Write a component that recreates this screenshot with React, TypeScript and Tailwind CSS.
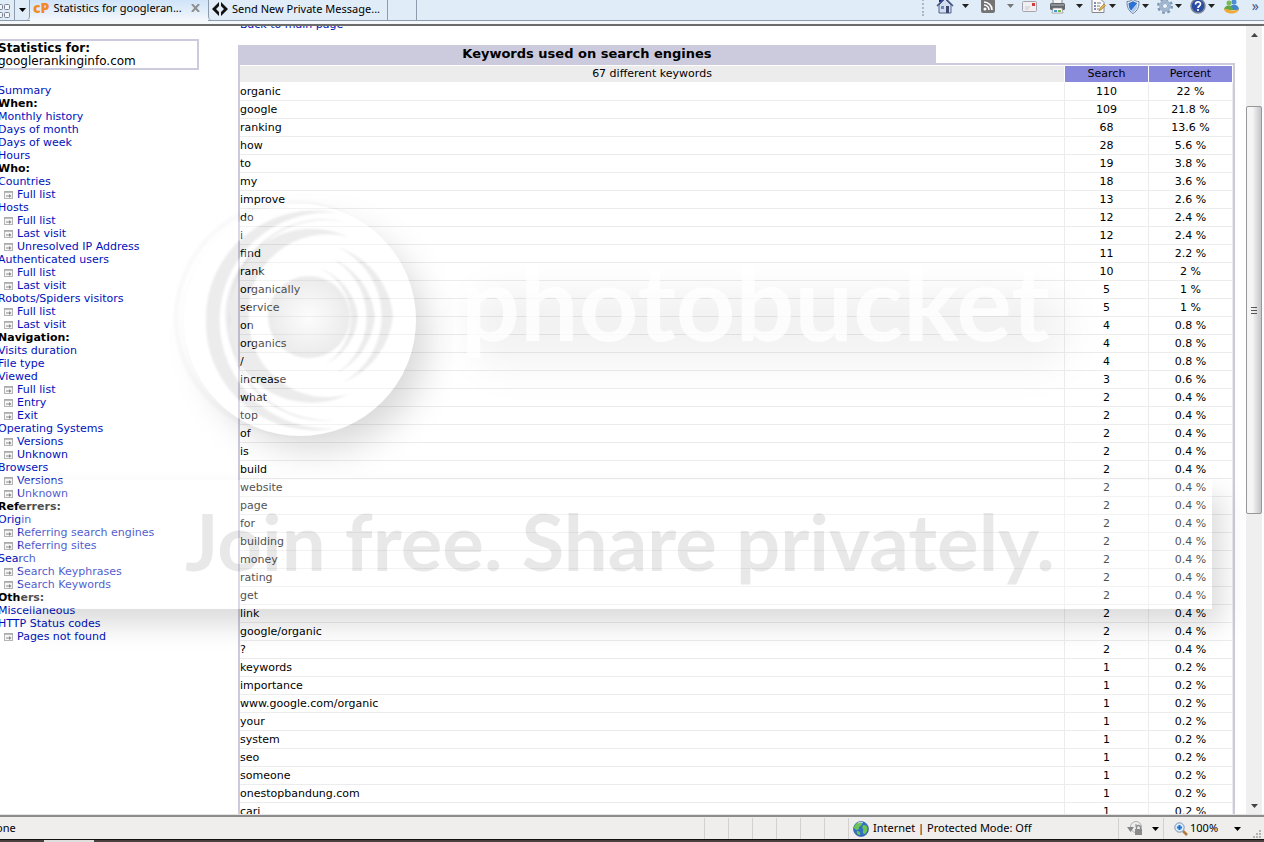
import React from 'react';

type NavItem = { label: string; kind?: 'title' | 'sub' };

const navItems: NavItem[] = [
  { label: 'Summary' },
  { label: 'When:', kind: 'title' },
  { label: 'Monthly history' },
  { label: 'Days of month' },
  { label: 'Days of week' },
  { label: 'Hours' },
  { label: 'Who:', kind: 'title' },
  { label: 'Countries' },
  { label: 'Full list', kind: 'sub' },
  { label: 'Hosts' },
  { label: 'Full list', kind: 'sub' },
  { label: 'Last visit', kind: 'sub' },
  { label: 'Unresolved IP Address', kind: 'sub' },
  { label: 'Authenticated users' },
  { label: 'Full list', kind: 'sub' },
  { label: 'Last visit', kind: 'sub' },
  { label: 'Robots/Spiders visitors' },
  { label: 'Full list', kind: 'sub' },
  { label: 'Last visit', kind: 'sub' },
  { label: 'Navigation:', kind: 'title' },
  { label: 'Visits duration' },
  { label: 'File type' },
  { label: 'Viewed' },
  { label: 'Full list', kind: 'sub' },
  { label: 'Entry', kind: 'sub' },
  { label: 'Exit', kind: 'sub' },
  { label: 'Operating Systems' },
  { label: 'Versions', kind: 'sub' },
  { label: 'Unknown', kind: 'sub' },
  { label: 'Browsers' },
  { label: 'Versions', kind: 'sub' },
  { label: 'Unknown', kind: 'sub' },
  { label: 'Referrers:', kind: 'title' },
  { label: 'Origin' },
  { label: 'Referring search engines', kind: 'sub' },
  { label: 'Referring sites', kind: 'sub' },
  { label: 'Search' },
  { label: 'Search Keyphrases', kind: 'sub' },
  { label: 'Search Keywords', kind: 'sub' },
  { label: 'Others:', kind: 'title' },
  { label: 'Miscellaneous' },
  { label: 'HTTP Status codes' },
  { label: 'Pages not found', kind: 'sub' },
];

const keywords: [string, number, string][] = [
  ['organic', 110, '22 %'],
  ['google', 109, '21.8 %'],
  ['ranking', 68, '13.6 %'],
  ['how', 28, '5.6 %'],
  ['to', 19, '3.8 %'],
  ['my', 18, '3.6 %'],
  ['improve', 13, '2.6 %'],
  ['do', 12, '2.4 %'],
  ['i', 12, '2.4 %'],
  ['find', 11, '2.2 %'],
  ['rank', 10, '2 %'],
  ['organically', 5, '1 %'],
  ['service', 5, '1 %'],
  ['on', 4, '0.8 %'],
  ['organics', 4, '0.8 %'],
  ['/', 4, '0.8 %'],
  ['increase', 3, '0.6 %'],
  ['what', 2, '0.4 %'],
  ['top', 2, '0.4 %'],
  ['of', 2, '0.4 %'],
  ['is', 2, '0.4 %'],
  ['build', 2, '0.4 %'],
  ['website', 2, '0.4 %'],
  ['page', 2, '0.4 %'],
  ['for', 2, '0.4 %'],
  ['building', 2, '0.4 %'],
  ['money', 2, '0.4 %'],
  ['rating', 2, '0.4 %'],
  ['get', 2, '0.4 %'],
  ['link', 2, '0.4 %'],
  ['google/organic', 2, '0.4 %'],
  ['?', 2, '0.4 %'],
  ['keywords', 1, '0.2 %'],
  ['importance', 1, '0.2 %'],
  ['www.google.com/organic', 1, '0.2 %'],
  ['your', 1, '0.2 %'],
  ['system', 1, '0.2 %'],
  ['seo', 1, '0.2 %'],
  ['someone', 1, '0.2 %'],
  ['onestopbandung.com', 1, '0.2 %'],
  ['cari', 1, '0.2 %'],
];

const Arrow = ({ className = '' }: { className?: string }) => (
  <svg className={`h-1 w-[7px] shrink-0 ${className}`} viewBox="0 0 7 4" fill="currentColor">
    <path d="M0 0h7L3.5 4z" />
  </svg>
);

const HomeIcon = () => (
  <svg width="18" height="16" viewBox="0 0 18 16">
    <path d="M3 0h3v4H3z" fill="#1e2a9a" />
    <path d="M3 7l6-6 6 6v8H3z" fill="#d3dcef" stroke="#53648c" />
    <path d="M1 8l8-8 8 8" fill="none" stroke="#44557f" strokeWidth="1.5" />
    <path d="M5 8h3v3H5z" fill="#6d86b5" />
    <path d="M10 8h3v7h-3z" fill="#3d4a70" />
  </svg>
);

const RssIcon = () => (
  <svg width="14" height="14" viewBox="0 0 14 14">
    <rect width="14" height="14" rx="2" fill="#737373" />
    <circle cx="4" cy="10" r="1.5" fill="#fff" />
    <path d="M3 6a5 5 0 015 5M3 3a8 8 0 018 8" fill="none" stroke="#fff" strokeWidth="1.6" />
  </svg>
);

const MailIcon = () => (
  <svg width="15" height="11" viewBox="0 0 15 11">
    <rect x=".5" y=".5" width="14" height="10" rx="1" fill="#f1eff1" stroke="#a3a3ac" />
    <path d="M10 2h3v3h-3z" fill="#d8393b" />
    <path d="M3 6h5M3 8h4" stroke="#c9c9d0" />
  </svg>
);

const PrinterIcon = () => (
  <svg width="17" height="15" viewBox="0 0 17 15">
    <path d="M4 0h9v5H4z" fill="#f4f4f4" stroke="#8b8b8b" />
    <rect x="1" y="4" width="15" height="7" rx="1.5" fill="#63666b" />
    <path d="M2 6h13" stroke="#b9bcc1" />
    <path d="M4 9h9l1 5H3z" fill="#fff" stroke="#8b8b8b" strokeWidth=".7" />
    <path d="M5 11h3v2H5z" fill="#3b9fd6" />
    <path d="M9 11h3v2H9z" fill="#7cb64a" />
  </svg>
);

const PageIcon = () => (
  <svg width="16" height="15" viewBox="0 0 16 15">
    <path d="M1 .5h9l3 3v10H1z" fill="#fbfbfb" stroke="#87878d" />
    <path d="M3 4h2M3 7h2M3 10h2" stroke="#5568a8" strokeWidth="1.5" />
    <path d="M6 4h4M6 7h3M6 10h2" stroke="#7b7b85" />
    <path d="M8 12l1-3 4-4 1.500 1.500-4 4z" fill="#e4b54c" stroke="#94702a" strokeWidth=".6" />
  </svg>
);

const ShieldIcon = () => (
  <svg width="14" height="15" viewBox="0 0 14 15">
    <path d="M7 .5C5 2 3 2.500 1 2.500c0 5 1 9 6 12 5-3 6-7 6-12-2 0-4-.5-6-2z" fill="#f5f8fc" stroke="#6d7f9d" />
    <path d="M7 2C5.500 3 4 3.800 2.500 3.900c0 3 .5 5.600 2.500 7.800L11.500 4C10 3.800 8.500 3 7 2z" fill="#2d72d2" />
    <path d="M5 12l6.500-7.500c0 3-1 6.500-4.500 9z" fill="#a9c8ee" />
  </svg>
);

const GearIcon = () => (
  <svg width="16" height="16" viewBox="0 0 16 16">
    <circle cx="8" cy="8" r="6.500" fill="none" stroke="#7c95b3" strokeWidth="3" strokeDasharray="2.500 2.600" />
    <circle cx="8" cy="8" r="4.500" fill="none" stroke="#9fb5ce" strokeWidth="3" />
    <circle cx="8" cy="8" r="2.500" fill="#f2f7fc" stroke="#7590b0" strokeWidth=".8" />
  </svg>
);

const HelpIcon = () => (
  <svg width="16" height="16" viewBox="0 0 16 16">
    <circle cx="8" cy="8" r="7" fill="#2b4ca3" stroke="#7d8595" strokeWidth="1.5" />
    <path d="M5.500 6.500C5.500 3 10.500 3 10.500 6c0 2-2.500 2-2.500 4" fill="none" stroke="#fff" strokeWidth="1.700" />
    <circle cx="8" cy="12" r="1.100" fill="#fff" />
  </svg>
);

const PeopleIcon = () => (
  <svg width="17" height="15" viewBox="0 0 17 15">
    <circle cx="11" cy="3" r="2.500" fill="#4b8fd0" />
    <path d="M6 11c0-7 10-7 10 0z" fill="#3f86cb" />
    <circle cx="6" cy="4" r="2.500" fill="#7bb95a" />
    <path d="M1 11c0-6 9-6 9 0z" fill="#5fa944" />
    <path d="M1 10c4-1 6 4 15 0-1 6-14 6-15 0z" fill="#efa93a" />
  </svg>
);

const toolIcons = [
  { name: 'Home', Icon: HomeIcon, arrow: 'ml-2 mr-3 text-[#222]' },
  { name: 'Feeds', Icon: RssIcon, arrow: 'ml-3 mr-2 text-[#777]' },
  { name: 'Read mail', Icon: MailIcon, arrow: '' },
  { name: 'Print', Icon: PrinterIcon, arrow: 'ml-2.5 mr-2 text-[#222]' },
  { name: 'Page', Icon: PageIcon, arrow: 'ml-0.5 mr-2.5 text-[#222]' },
  { name: 'Safety', Icon: ShieldIcon, arrow: 'ml-0.5 mr-2 text-[#222]' },
  { name: 'Tools', Icon: GearIcon, arrow: 'ml-0.5 mr-2 text-[#222]' },
  { name: 'Help', Icon: HelpIcon, arrow: 'ml-0.5 mr-2 text-[#222]' },
  { name: 'Messenger', Icon: PeopleIcon, arrow: '' },
];

const TabBar = () => (
  <header className="shrink-0 border-b-2 border-[#6b6b6b] bg-[#f4f8fb] pb-[3px] text-[11px] text-black">
    <div className="flex h-[21px] border-b border-[#8d9bad] bg-[#e0ecf8]">
      <button className="flex w-[15px] items-center border-r border-[#8d9bad]" aria-label="Quick tabs">
        <svg width="11" height="15" viewBox="0 0 11 15" fill="#f4f6fa" stroke="#7a8394">
          <rect x="-3.500" y="1.500" width="6" height="5" rx="1" />
          <rect x="4.500" y="1.500" width="5" height="5" rx="1" />
          <rect x="-3.500" y="9.500" width="6" height="5" rx="1" />
          <rect x="4.500" y="9.500" width="5" height="5" rx="1" />
        </svg>
      </button>
      <button className="flex w-[15px] items-center justify-center rounded-br border-r border-[#8d9bad]" aria-label="Tab list">
        <Arrow className="w-[5px]" />
      </button>
      <div className="-mb-px flex w-[178px] items-center gap-1 bg-linear-to-b from-[#cfe3f9] to-[#f4f8fb] pb-1.5 pl-[3px]">
        <span className="font-['Open_Sans',sans-serif] text-sm leading-4 font-extrabold text-[#f08a24]">cP</span>
        <button className="leading-4 whitespace-nowrap">Statistics for googleran...</button>
        <button className="mr-2 ml-auto" aria-label="Close tab">
          <svg width="9" height="8" viewBox="0 0 10 9" stroke="#8f8f8f" strokeWidth="2.200">
            <path d="M1 0l8 9M9 0L1 9" />
          </svg>
        </button>
      </div>
      <button className="flex w-[180px] items-center gap-1 rounded-bl border-x border-[#8d9bad] pb-0.5 pl-[3px]">
        <svg className="shrink-0" width="16" height="14" viewBox="0 0 16 14">
          <path d="M7 0v4L4 7l3 3v4L0 7zM9 0v4l3 3-3 3v4l7-7z" fill="#111" />
        </svg>
        <span className="leading-4 whitespace-nowrap">Send New Private Message...</span>
      </button>
      <button className="w-[29px] border-r border-[#8d9bad]" aria-label="New tab" />
      <div className="ml-auto flex items-center pr-[5px] pb-2">
        <span className="mr-3 h-5 border-l-2 border-dotted border-[#a9b8c9]" />
        {toolIcons.map(({ name, Icon, arrow }) => (
          <button key={name} className="flex items-center" aria-label={name}>
            <Icon />
            {arrow ? <Arrow className={arrow} /> : <span className="w-3" />}
          </button>
        ))}
        <button className="h-5 text-sm leading-3 text-[#44557f]" aria-label="More tools">
          »
        </button>
      </div>
    </div>
  </header>
);

const SubIcon = () => (
  <svg className="mr-1 ml-1.5 shrink-0" width="9" height="8" viewBox="0 0 9 8">
    <rect x=".5" y=".5" width="8" height="7" fill="#f6f6f6" stroke="#b4b4b4" />
    <path d="M0 1h9" stroke="#a9a9a9" strokeWidth="1.500" />
    <path d="M2 4.500h3V3l2.500 2L5 7V5.500H2z" fill="#8c8c8c" />
  </svg>
);

const Sidebar = () => (
  <nav className="w-[238px] shrink-0 pt-[13px]">
    <div className="w-[199px] border-2 border-l-0 border-[#cccbdd] text-xs">
      <div className="-ml-0.5">
        <b className="block leading-[14px]">Statistics for:</b>
        <span className="block leading-[13px]">googlerankinginfo.com</span>
      </div>
    </div>
    <ul className="mt-[14px] -ml-0.5 text-[11px] leading-[13px]">
      {navItems.map(({ label, kind }, i) => (
        <li key={i} className="flex items-center whitespace-nowrap">
          {kind === 'sub' && <SubIcon />}
          {kind === 'title' ? (
            <b>{label}</b>
          ) : (
            <a href="#" className="text-[#0011bb]">
              {label}
            </a>
          )}
        </li>
      ))}
    </ul>
  </nav>
);

const KeywordTable = () => (
  <section className="mr-[11px] min-w-0 flex-1 text-[11px]">
    <a href="#" className="-mt-2 block h-[27px] pl-0.5 leading-[13px] text-[#0011bb]">
      Back to main page
    </a>
    <h1 className="w-[70%] bg-[#cccbdd] text-center text-[13px] leading-[18px] font-bold">
      Keywords used on search engines
    </h1>
    <div className="border-2 border-[#cccbdd]">
      <table className="w-full table-fixed border-collapse text-center leading-[17px]">
        <thead>
          <tr>
            <th className="border-y border-white bg-[#ececec] p-0 leading-4 font-normal">67 different keywords</th>
            <th className="w-[84px] border border-white bg-[#8888dd] p-0 leading-4 font-normal">Search</th>
            <th className="w-[84px] border border-white bg-[#8888dd] p-0 leading-4 font-normal">Percent</th>
          </tr>
        </thead>
        <tbody>
          {keywords.map(([word, hits, percent]) => (
            <tr key={word} className="h-[18px]">
              <td className="border-r border-b border-[#ececec] p-0 text-left">{word}</td>
              <td className="border-r border-b border-[#ececec] p-0">{hits}</td>
              <td className="border-r border-b border-[#ececec] p-0">{percent}</td>
            </tr>
          ))}
        </tbody>
      </table>
    </div>
  </section>
);

const ScrollBar = () => (
  <div className="mr-0.5 flex w-4 shrink-0 flex-col bg-[#efefef]">
    <button className="flex h-[17px] items-center justify-center" aria-label="Scroll up">
      <Arrow className="rotate-180 text-[#444]" />
    </button>
    <div className="grow-63 basis-0" />
    <div className="flex grow-407 basis-0 flex-col items-center justify-center gap-px rounded-xs border border-[#979797] bg-linear-to-r from-[#f5f5f5] from-40% to-[#c4c4ca]">
      <span className="h-0.5 w-1.5 border-b border-[#555]" />
      <span className="h-0.5 w-1.5 border-b border-[#555]" />
      <span className="h-0.5 w-1.5 border-b border-[#555]" />
    </div>
    <div className="grow-284 basis-0" />
    <button className="flex h-[17px] items-center justify-center" aria-label="Scroll down">
      <Arrow className="text-[#444]" />
    </button>
  </div>
);

const Crescents = () => (
  <>
    <path d="M338 213A108 108 0 1 0 338 428A109 107 0 0 1 206 320A109 107 0 0 1 338 213z" />
    <path d="M347 222A98 100 0 1 0 340 419A93 93 0 0 1 230 320A94 94 0 0 1 347 222z" />
    <path d="M348 237A86 87 0 1 0 349 394A78 78 0 0 1 249 320A79 78 0 0 1 348 237z" />
    <path d="M337 247A76 76 0 0 1 342 383A80 80 0 0 0 393 316A80 80 0 0 0 337 247z" />
    <path d="M329 257A67 67 0 0 1 335 374A70 70 0 0 0 375 316A72 72 0 0 0 329 257z" />
    <path d="M317 267A55 55 0 0 1 324 365A58 58 0 0 0 358 316A60 60 0 0 0 317 267z" />
  </>
);

// White swirl: a disc with tapered grey crescents cut into it
const Swirl = () => (
  <svg className="absolute top-[160px] left-[140px]" width="340" height="340" viewBox="140 160 340 340">
    <defs>
      <filter id="halo" x="-50%" y="-50%" width="200%" height="200%">
        <feGaussianBlur stdDeviation="17" />
      </filter>
      <filter id="soft">
        <feGaussianBlur stdDeviation="1" />
      </filter>
      <mask id="outside">
        <rect x="140" y="160" width="340" height="340" fill="#fff" />
        <circle cx="300" cy="320" r="116" fill="#000" />
      </mask>
      <mask id="rings">
        <circle cx="300" cy="320" r="116" fill="#fff" />
        <Crescents />
      </mask>
      <radialGradient id="core">
        <stop offset="0" stopOpacity=".01" />
        <stop offset="1" stopOpacity=".08" />
      </radialGradient>
    </defs>
    <g mask="url(#outside)">
      <circle cx="316" cy="338" r="112" fillOpacity=".15" filter="url(#halo)" />
      <circle cx="292" cy="318" r="116" fill="none" stroke="#000" strokeOpacity=".02" strokeWidth="5" filter="url(#soft)" />
    </g>
    <circle cx="300" cy="320" r="116" fill="#fff" fillOpacity=".3" mask="url(#rings)" />
    <g fillOpacity=".075" filter="url(#soft)">
      <Crescents />
    </g>
    <circle cx="309" cy="317" r="41" fill="url(#core)" filter="url(#soft)" />
  </svg>
);

const Watermark = () => (
  <div className="pointer-events-none absolute inset-0 overflow-hidden" aria-hidden="true">
    <Swirl />
    <div className="absolute top-[292px] left-[470px] h-[60px] w-[590px] rounded-full bg-black/5 shadow-[6px_10px_26px_8px_rgb(0_0_0/0.04)] blur-lg" />
    <div className="absolute top-[241px] left-[461px] font-[Lato,sans-serif] text-[104px] leading-[120px] font-bold text-white/80">
      photobucket
    </div>
    <div className="absolute top-[480px] right-[52px] left-5 h-[129px] bg-white/30 shadow-[10px_16px_26px_rgb(0_0_0/0.14)]" />
    <div className="absolute top-[493px] left-[185px] font-[Lato,sans-serif] text-[78px] leading-[96px] font-bold whitespace-nowrap text-black/9">
      Join free. Share privately.
    </div>
  </div>
);

const StatusBar = () => (
  <footer className="shrink-0 border-t border-[#e4e2e2] bg-[#f0eded] text-[11px] text-black">
    <div className="flex h-6 items-stretch border-t-2 border-[#8c8c8c] pt-px pr-0.5">
      <span className="-ml-3 flex flex-1 items-center">Done</span>
      {[0, 1, 2, 3, 4, 5].map((n) => (
        <span key={n} className="w-6 border-l border-[#d3d0d0]" />
      ))}
      <div className="flex w-[270px] items-center gap-1 border-l border-[#d3d0d0] pl-1">
        <svg width="16" height="16" viewBox="0 0 16 16">
          <circle cx="8" cy="8" r="7.500" fill="#2f6fc4" stroke="#24528f" strokeWidth=".6" />
          <path d="M3 3c3-3 6-2 6 0S6 5 6 7s-3 3-5 0c0-2 1-3 2-4zM11 4c3 0 4 3 3 6s-3 4-4 2 1-3 0-4-1-4 1-4zM4 10c2 0 4 1 3 4-2 0-4-2-3-4z" fill="#6cc552" />
          <path d="M5 2c2-1 4-1 5 0" stroke="#cfe6fa" fill="none" />
        </svg>
        <span>Internet | Protected Mode: Off</span>
      </div>
      <button className="flex w-[45px] items-center justify-between border-l border-[#d3d0d0] pr-1 pl-2" aria-label="Protected mode">
        <svg width="17" height="15" viewBox="0 0 17 15">
          <circle cx="9" cy="6" r="5.500" fill="#ededed" stroke="#b0b0b0" />
          <path d="M0 6h7L3.500 11z" fill="#858585" />
          <path d="M9 6V3" stroke="#858585" />
          <rect x="8" y="8" width="7" height="6" fill="#8a8a8a" />
          <path d="M9.500 8V6.500a2 2 0 014 0V8" fill="none" stroke="#8a8a8a" strokeWidth="1.300" />
        </svg>
        <Arrow />
      </button>
      <button className="flex w-[90px] items-center border-l border-[#d3d0d0] pr-3 pl-2.5" aria-label="Zoom level">
        <svg width="14" height="14" viewBox="0 0 14 14">
          <path d="M9 9l4 4" stroke="#b07a3c" strokeWidth="2.500" />
          <circle cx="5.500" cy="5.500" r="4.700" fill="#d8ecfc" stroke="#7d93b0" />
          <path d="M5.500 3v5M3 5.500h5" stroke="#1f6fd0" strokeWidth="2" />
        </svg>
        <span className="ml-0.5">100%</span>
        <Arrow className="ml-auto" />
      </button>
      <svg className="ml-auto self-end" width="9" height="9" viewBox="0 0 9 9" fill="#b5b2b2">
        <path d="M6 0h2v2H6zM3 3h2v2H3zM6 3h2v2H6zM0 6h2v2H0zM3 6h2v2H3zM6 6h2v2H6z" />
      </svg>
    </div>
    <div className="flex h-[3px] border-t border-[#111] bg-[#4b403d]">
      <span className="ml-11 w-[50px] bg-[#dedede]" />
    </div>
  </footer>
);

const App = () => {
  return (
    <div className="relative flex h-screen flex-col overflow-hidden bg-white font-['Noto_Sans',sans-serif]">
      <TabBar />
      <main className="flex min-h-0 flex-1 overflow-hidden font-['DejaVu_Sans',sans-serif] text-black">
        <Sidebar />
        <KeywordTable />
        <ScrollBar />
      </main>
      <StatusBar />
      <Watermark />
    </div>
  );
};

export default App;
